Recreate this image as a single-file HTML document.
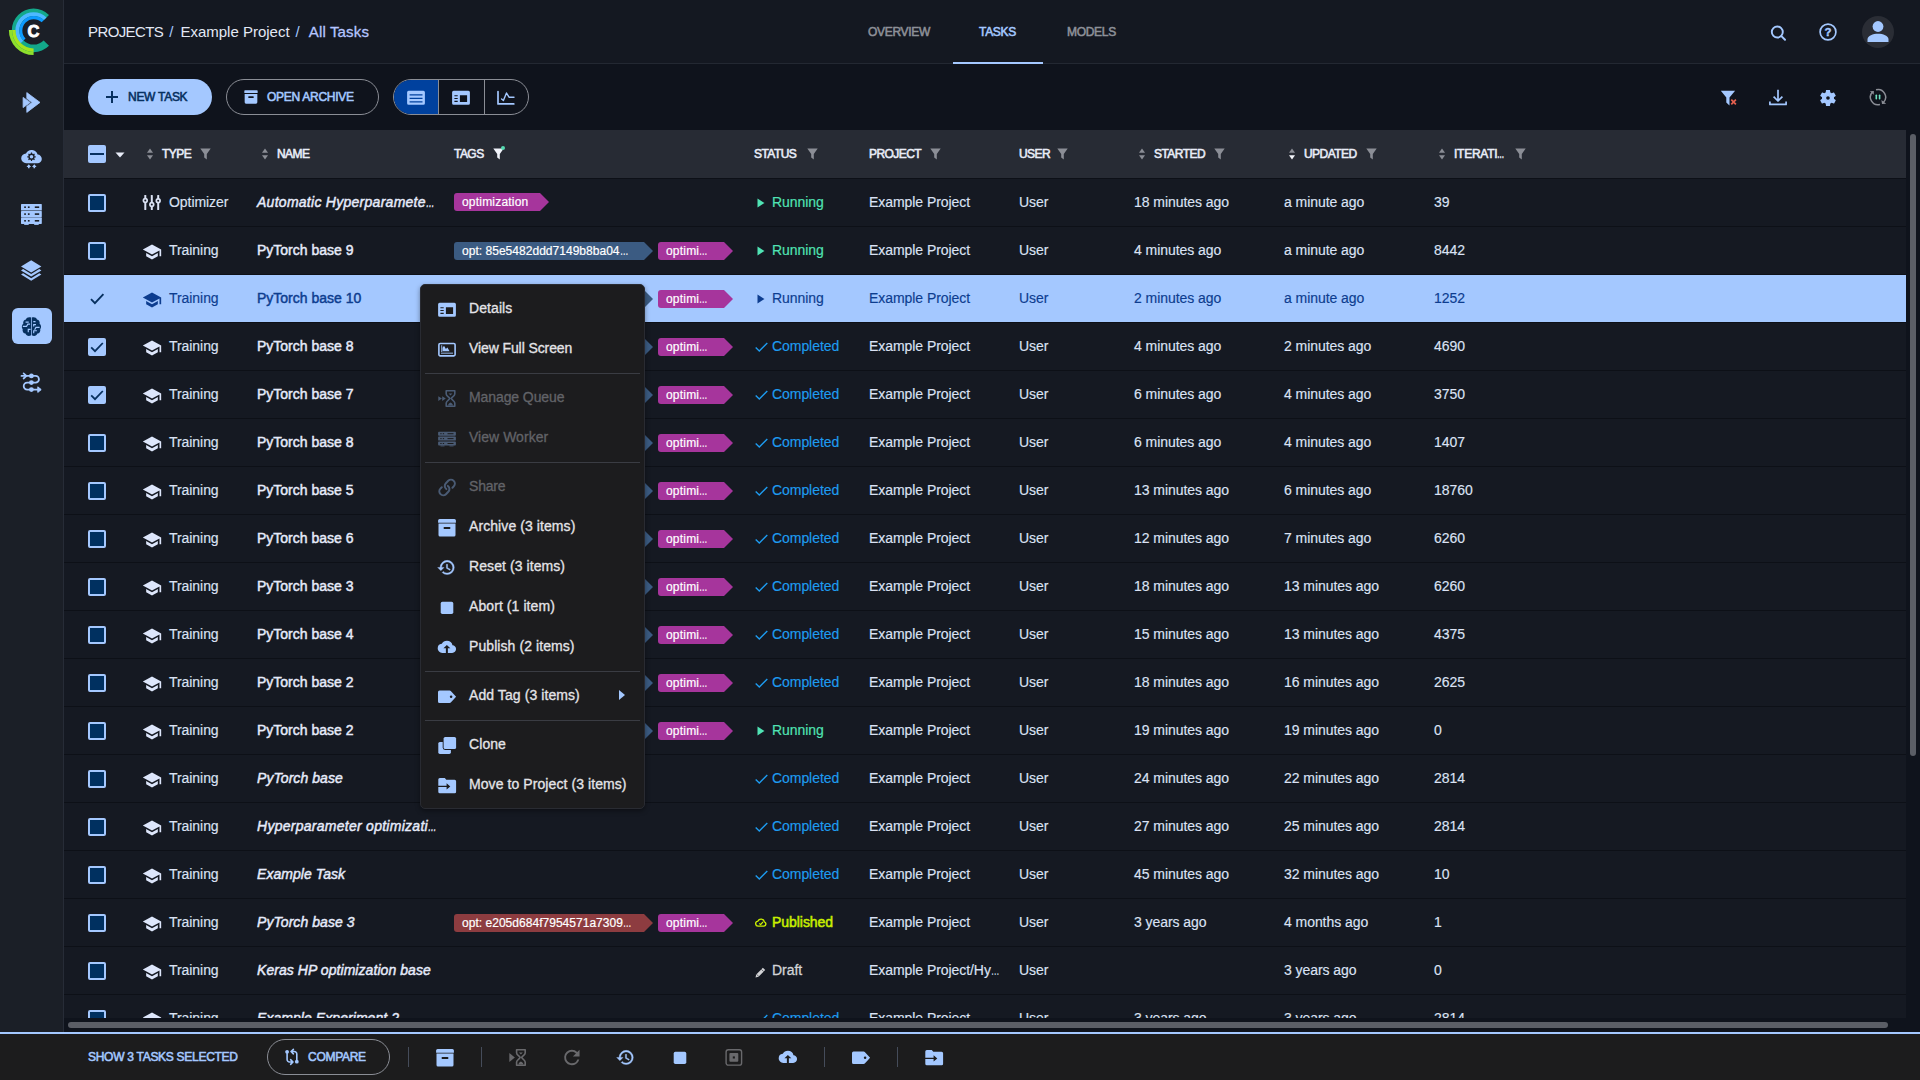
<!DOCTYPE html><html lang="en"><head><meta charset="utf-8"><title>ClearML - Example Project - All Tasks</title><style>
*{box-sizing:border-box}
html,body{margin:0;padding:0}
body{width:1920px;height:1080px;overflow:hidden;background:#0f131c;font-family:"Liberation Sans",sans-serif;font-size:14px;color:#dbe2f4;position:relative}
.abs{position:absolute}
svg{display:block}
#side{position:absolute;left:0;top:0;width:64px;height:1032px;background:#1b1f27;border-right:1px solid #272c37}
#hdr{position:absolute;left:64px;top:0;width:1856px;height:64px;background:#141821;border-bottom:1px solid #232832}
.sbi{position:absolute;left:20px;width:24px;height:24px}
#sbact{position:absolute;left:12px;top:308px;width:40px;height:36px;border-radius:6px;background:#a4c8ff}
#crumb{position:absolute;left:88px;top:0;height:64px;line-height:63px;font-size:15px;white-space:nowrap;color:#e3e8f5}
#crumb .s{color:#a4c8ff;padding:0 7px 0 6px}
#crumb .p{letter-spacing:-0.6px}
#crumb .c{color:#b4c5ff;-webkit-text-stroke:0.3px #b4c5ff;letter-spacing:0.15px;padding-left:2px}
.tab{position:absolute;top:0;height:64px;line-height:64px;font-size:12px;font-weight:400;-webkit-text-stroke:0.55px currentColor;letter-spacing:-0.3px;color:#8d9098;white-space:nowrap}
.tab.on{color:#a4c8ff}
#tabline{position:absolute;left:953px;top:62px;width:90px;height:2px;background:#a4c8ff}
.up{font-size:12px;font-weight:400;-webkit-text-stroke:0.55px currentColor;letter-spacing:-0.28px;white-space:nowrap}
#newtask{position:absolute;left:88px;top:79px;width:124px;height:36px;border-radius:18px;background:#a4c8ff;color:#07305f}
#archive{position:absolute;left:226px;top:79px;width:153px;height:36px;border-radius:18px;border:1px solid #8a8d95;color:#a4c8ff}
#tog{position:absolute;left:393px;top:79px;width:136px;height:36px;border-radius:18px;border:1px solid #8a8d95;overflow:hidden}
#tog .a{position:absolute;left:0;top:0;width:44px;height:34px;background:#00419e}
#tog .d{position:absolute;top:0;width:1px;height:34px;background:#8a8d95}
#thead{position:absolute;left:64px;top:130px;width:1842px;height:48px;background:#272b34}
.th{position:absolute;top:0;height:48px;line-height:48px;font-size:12px;font-weight:400;-webkit-text-stroke:0.55px currentColor;letter-spacing:-0.55px;color:#e9edf8;white-space:nowrap}
.thi{position:absolute}
#rows{position:absolute;left:64px;top:178px;width:1842px;height:840px;overflow:hidden}
.row{position:relative;height:48px;border-top:1px solid #0d1017;background:#151922;line-height:47px;white-space:nowrap;letter-spacing:-0.06px;-webkit-text-stroke:0.15px currentColor}
.row.sel{background:#a4c8ff;color:#0d3d8f}
.c{position:absolute;top:0;height:47px}
.nm{font-weight:400;-webkit-text-stroke:0.45px currentColor;letter-spacing:0;color:#e6ebfb}
.nm.it{font-style:italic;letter-spacing:0.06px}
.nm.it.tr{letter-spacing:0.27px}
.row.sel .nm{color:#0d3d8f}
.cb{position:absolute;left:24px;top:15px;width:18px;height:18px;border:2px solid #a4c8ff;border-radius:2px;background:#003060}
.cb.on{background:#a4c8ff}
.tag{position:absolute;top:14px;height:18px;line-height:18px;font-size:12px;color:#fff;border-radius:3px 0 0 3px;padding-left:8px;letter-spacing:0.2px;-webkit-text-stroke:0.2px #fff}
.tag.lg{letter-spacing:0.03px}
.tag .el{width:8px;transform:scaleX(0.7)}
.tag:after{content:"";position:absolute;right:-9px;top:0;border-left:9px solid var(--c);border-top:9px solid transparent;border-bottom:9px solid transparent}
.el{display:inline-block;width:7px;transform:scaleX(0.6);transform-origin:0 50%}
.st-run{color:#50e3b4}.st-done{color:#1e9cf0}.st-pub{color:#c9ef00;-webkit-text-stroke:0.5px #c9ef00;letter-spacing:-0.05px}.st-draft{color:#d2d3d6;-webkit-text-stroke:0.3px #d2d3d6}
.row.sel .st-run{color:#0d3d8f}
#hs{position:absolute;left:68px;top:1022px;width:1820px;height:6px;border-radius:3px;background:#5b5e66}
#vs{position:absolute;left:1910px;top:134px;width:6px;height:622px;border-radius:3px;background:#5b5e66}
#foot{position:absolute;left:0;top:1032px;width:1920px;height:48px;border-top:2px solid #a4c8ff;background:#1c1c1d}
.fsep{position:absolute;top:13px;width:1px;height:20px;background:#454c5a}
.fi{position:absolute;top:14px;width:18px;height:18px}
#cmp{position:absolute;left:267px;top:5px;width:123px;height:36px;border-radius:18px;border:1px solid #8a8d95;color:#a4c8ff}
#menu{position:absolute;left:420px;top:284px;width:225px;height:525px;background:#1c1c1e;border-radius:5px;box-shadow:0 2px 5px rgba(0,0,0,.4);border:1px solid #292b32}
.mi{position:absolute;left:0;width:223px;height:40px;line-height:40px;color:#e4e4e8;font-size:14px;-webkit-text-stroke:0.3px currentColor;white-space:nowrap;letter-spacing:0.08px}
.mi.dis{color:#626368}
.mi svg{position:absolute;left:17px;top:12px}
.mi span{position:absolute;left:48px;top:0}
.msep{position:absolute;left:4px;width:215px;height:1px;background:#3a3c43}
</style></head><body>
<div id="side">
<div class="abs" style="left:0;top:0"><svg width="64" height="64" viewBox="0 0 64 64"><path fill="#13a88a" d="M49.01 45.81A21.8 21.8 0 1 1 49.01 14.99L43.64 20.36A14.2 14.2 0 1 0 43.64 40.44Z"/><path fill="#4db9ff" d="M20.66 43.34A18.3 18.3 0 0 1 46.54 17.46L43.92 20.08A14.6 14.6 0 0 0 23.28 40.72Z"/><path fill="#0d9bff" d="M23.28 40.72A14.6 14.6 0 0 1 43.92 20.08L41.66 22.34A11.4 11.4 0 0 0 25.54 38.46Z"/><path fill="#a6e41e" d="M33.60 51.90A21.5 21.5 0 0 1 12.10 30.02L15.50 30.08A18.1 18.1 0 0 0 33.60 48.50Z"/><path fill="#8ee02c" d="M33.60 55.10A24.7 24.7 0 0 1 8.90 29.97L12.10 30.02A21.5 21.5 0 0 0 33.60 51.90Z"/><text x="33.4" y="37.3" text-anchor="middle" font-family="Liberation Sans, sans-serif" font-weight="700" font-size="16.5" fill="#fff" stroke="#fff" stroke-width="0.9">C</text></svg></div>
<div id="sbact"></div>
<div class="sbi" style="top:90px"><svg width="24" height="24" viewBox="0 0 24 24"><path fill="#a4c8ff" stroke="#a4c8ff" stroke-width="0.8" stroke-linejoin="round" d="M3.1 7.4L10.3 12.4 3.1 17.6z"/><path fill="#a4c8ff" stroke="#a4c8ff" stroke-width="0.8" stroke-linejoin="round" d="M6.8 2.6L20 12.4 6.8 22.4V16.3L12.2 12.4 6.8 8.5z"/></svg></div>
<div class="sbi" style="top:146px"><svg width="24" height="24" viewBox="0 0 24 24"><path fill="#a4c8ff" d="M17.6 8.6A6.2 6.2 0 0 0 6 7.4 4.9 4.9 0 0 0 6.2 17.2h11.2a4.3 4.3 0 0 0 .2-8.600z"/><circle cx="11.500" cy="10.800" r="2.500" fill="none" stroke="#1b1f27" stroke-width="1.400"/><path stroke="#1b1f27" stroke-width="1.200" d="M11.500 6.600v1.400M11.500 13.600v1.400M7.300 10.800h1.400M14.300 10.800h1.400M8.500 7.800l1 1M13.500 12.800l1 1M14.500 7.800l-1 1M8.500 13.800l1-1"/><path fill="#a4c8ff" d="M8.800 18.300l2.300 2.700H9.600v1.200H8v-1.200H6.500zM14.300 18.300l2.300 2.700h-1.500v1.200h-1.600v-1.200H12z"/></svg></div>
<div class="sbi" style="top:202px"><svg width="24" height="24" viewBox="0 0 24 24"><rect x="1" y="2.0" width="20.800" height="6.300" rx="0.600" fill="#a4c8ff"/><rect x="4.200" y="4.4" width="1.700" height="1.600" fill="#1b1f27"/><rect x="7.900" y="4.4" width="1.700" height="1.600" fill="#1b1f27"/><rect x="14.800" y="4.4" width="4.400" height="1.600" fill="#1b1f27"/><rect x="1" y="8.9" width="20.800" height="6.300" rx="0.600" fill="#a4c8ff"/><rect x="4.200" y="11.3" width="1.700" height="1.600" fill="#1b1f27"/><rect x="7.900" y="11.3" width="1.700" height="1.600" fill="#1b1f27"/><rect x="14.800" y="11.3" width="4.400" height="1.600" fill="#1b1f27"/><rect x="1" y="15.6" width="20.800" height="6.300" rx="0.600" fill="#a4c8ff"/><rect x="4.200" y="18.0" width="1.700" height="1.600" fill="#1b1f27"/><rect x="7.900" y="18.0" width="1.700" height="1.600" fill="#1b1f27"/><rect x="14.800" y="18.0" width="4.400" height="1.600" fill="#1b1f27"/><rect x="1" y="8.300" width="20.800" height="0.600" fill="#a4c8ff" opacity="0.55"/><rect x="1" y="15.200" width="20.800" height="0.400" fill="#a4c8ff" opacity="0.55"/><rect x="4.200" y="21.900" width="4.500" height="1" fill="#a4c8ff"/><rect x="14.200" y="21.900" width="4.500" height="1" fill="#a4c8ff"/></svg></div>
<div class="sbi" style="top:258px"><svg width="24" height="24" viewBox="0 0 24 24"><path fill="#a4c8ff" d="M11.200 2.200L1 8.400l10.200 6.200L21.400 8.400z"/><path fill="#a4c8ff" d="M3.100 11.100L1 12.400l10.200 6.200 10.200-6.200-2.100-1.300-8.100 4.900z"/><path fill="#a4c8ff" d="M3.100 15.300L1 16.600l10.200 6.200 10.200-6.200-2.100-1.300-8.100 4.900z"/></svg></div>
<div class="sbi" style="top:314px"><svg width="24" height="24" viewBox="0 0 24 24"><g transform="translate(0.575 1.470) scale(0.906 0.955)"><path fill="#07305f" d="M11.600 2.200C9.200 1.200 6.600 2 5.900 4.200 3.600 4.600 2.400 6.800 3 8.800 1.200 10 .8 12.600 2.300 14.300 1.700 16.600 3.200 18.800 5.400 19c.8 2.400 3.800 3.400 6.200 1.800zM12.400 2.200c2.400-1 5-.2 5.700 2 2.300.4 3.500 2.600 2.900 4.600 1.800 1.200 2.200 3.800.7 5.500.6 2.300-.9 4.500-3.100 4.700-.8 2.400-3.800 3.400-6.200 1.800z"/><path fill="none" stroke="#a4c8ff" stroke-width="1.300" d="M2.500 11.500h4l1.500-2.500h2.500M5.500 7h3.500M8.500 17.500v-3h2.500M21 12.500h-4l-1.500 2.500M14 6.500h2.500M17 9.500h-2.500v2M18 16h-3.500v2.500"/></g></svg></div>
<div class="sbi" style="top:370px"><svg width="24" height="24" viewBox="0 0 24 24"><path fill="none" stroke="#a4c8ff" stroke-width="1.800" stroke-linecap="round" stroke-linejoin="round" d="M1.500 5.900H15.600a3.350 3.350 0 0 1 0 6.700H7.200a3.500 3.500 0 0 0 0 7H20"/><path fill="none" stroke="#a4c8ff" stroke-width="1.700" stroke-linecap="round" stroke-linejoin="round" d="M3.600 3.300l2.900 2.600-2.900 2.600"/><path fill="#a4c8ff" stroke="#a4c8ff" stroke-width="1" stroke-linejoin="round" d="M17.800 16.800l3.400 2.800-3.400 2.800z"/><circle cx="11.400" cy="5.900" r="2.400" fill="#a4c8ff"/><circle cx="11.400" cy="12.600" r="2.400" fill="#a4c8ff"/><circle cx="11.400" cy="19.600" r="2.400" fill="#a4c8ff"/></svg></div>
</div>
<div id="hdr"></div>
<div id="crumb"><span class="p">PROJECTS</span><span class="s">/</span>Example Project<span class="s">/</span><span class="c">All Tasks</span></div>
<div class="tab" style="left:868px">OVERVIEW</div><div class="tab on" style="left:979px">TASKS</div><div class="tab" style="left:1067px">MODELS</div><div id="tabline"></div>
<div class="abs" style="left:1768px;top:22px"><svg width="20" height="20" viewBox="0 0 20 20"><circle cx="9.300" cy="10" r="5.500" fill="none" stroke="#a4c8ff" stroke-width="1.900"/><path stroke="#a4c8ff" stroke-width="2" stroke-linecap="round" d="M13.400 14.100l3.600 3.600"/></svg></div>
<div class="abs" style="left:1818px;top:22px"><svg width="20" height="20" viewBox="0 0 20 20"><circle cx="10" cy="10" r="7.900" fill="none" stroke="#a4c8ff" stroke-width="1.700"/><text x="10" y="14.200" text-anchor="middle" font-family="Liberation Sans, sans-serif" font-weight="700" font-size="11.500" fill="#a4c8ff" stroke="#a4c8ff" stroke-width="0.400">?</text></svg></div>
<div class="abs" style="left:1862px;top:16px"><svg width="32" height="32" viewBox="0 0 32 32"><circle cx="16" cy="16" r="16" fill="#2a2d35"/><circle cx="16" cy="10.500" r="5.400" fill="#a4c8ff"/><path fill="#a4c8ff" d="M5.500 26v-2.500c0-3.800 5.500-5.700 10.500-5.700s10.500 1.900 10.500 5.700V26z"/></svg></div>
<div id="newtask"><div class="abs" style="left:17px;top:11px"><svg width="14" height="14" viewBox="0 0 14 14"><path stroke="#07305f" stroke-width="2" d="M7 1v12M1 7h12"/></svg></div><div class="abs up" style="left:40px;top:0;line-height:36px">NEW TASK</div></div>
<div id="archive"><div class="abs" style="left:16px;top:9px"><svg width="16" height="16" viewBox="0 0 24 24"><path fill="#a4c8ff" d="M3 2h18a1 1 0 0 1 1 1v3H2V3a1 1 0 0 1 1-1zM2.500 7.500h19V20a2 2 0 0 1-2 2h-15a2 2 0 0 1-2-2z"/><rect x="8" y="11" width="8" height="2.500" rx="0.500" fill="#0f131c"/></svg></div><div class="abs up" style="left:40px;top:0;line-height:34px">OPEN ARCHIVE</div></div>
<div id="tog"><div class="a"></div><div class="d" style="left:44px"></div><div class="d" style="left:90px"></div><div class="abs" style="left:13px;top:8px"><svg width="18" height="18" viewBox="0 0 18 18" style="overflow:visible"><path fill="#a4c8ff" fill-rule="evenodd" d="M1.600 2.700h14.800a1.500 1.500 0 0 1 1.500 1.500v11.100a1.500 1.500 0 0 1-1.500 1.500H1.600a1.500 1.500 0 0 1-1.500-1.500V4.200a1.500 1.500 0 0 1 1.500-1.500zM2.600 6.300v1.200h12.900V6.300zM2.600 9.800v1.200h12.900V9.800zM2.600 13.300v1.200h12.900v-1.200z"/></svg></div><div class="abs" style="left:58px;top:8px"><svg width="18" height="18" viewBox="0 0 18 18" style="overflow:visible"><path fill="#a4c8ff" fill-rule="evenodd" d="M1.600 2.700h14.800a1.500 1.500 0 0 1 1.500 1.500v11.100a1.500 1.500 0 0 1-1.500 1.500H1.600a1.500 1.500 0 0 1-1.500-1.500V4.200a1.500 1.500 0 0 1 1.500-1.500zM7.900 7.200v6.700h7.200V7.200zM2.400 7.200v1.100h3.300V7.200zM2.400 10v1.100h3.300V10zM2.400 12.800v1.100h3.300v-1.100z"/></svg></div><div class="abs" style="left:103px;top:8px"><svg width="18" height="18" viewBox="0 0 18 18" style="overflow:visible"><path fill="none" stroke="#a4c8ff" stroke-width="1.700" stroke-linecap="round" stroke-linejoin="round" d="M1 3.600v12.300h15.800"/><path fill="none" stroke="#a4c8ff" stroke-width="1.400" stroke-linecap="round" stroke-linejoin="round" d="M4.600 11l1.800 1.500L9.500 5l2.500 4.200h5"/></svg></div></div>
<div class="abs" style="left:1718px;top:88px"><svg width="20" height="20" viewBox="0 0 20 20" style="overflow:visible"><path fill="#a4c8ff" d="M2.800 2.800h14.300l-5.600 6.800v7.800l-3.200-2.800V9.600z"/><path stroke="#e5604f" stroke-width="1.700" d="M13.300 11.700l4.600 4.600M17.900 11.700l-4.600 4.600"/></svg></div>
<div class="abs" style="left:1768px;top:88px"><svg width="20" height="20" viewBox="0 0 20 20"><path fill="none" stroke="#a4c8ff" stroke-width="1.700" stroke-linejoin="round" d="M10 1.800v11M5.600 8.600L10 13l4.400-4.400M1.900 13.600v2.800h16.200v-2.800"/></svg></div>
<div class="abs" style="left:1818px;top:88px"><svg width="20" height="20" viewBox="0 0 24 24"><path fill="#a4c8ff" d="M19.140 12.940c.04-.3.060-.61.060-.94 0-.32-.020-.64-.070-.94l2.030-1.580c.18-.14.230-.41.120-.61l-1.920-3.320c-.12-.22-.37-.29-.59-.22l-2.390.96c-.5-.38-1.030-.7-1.620-.94l-.36-2.540c-.04-.24-.24-.41-.48-.41h-3.840c-.24 0-.43.17-.47.41l-.36 2.540c-.59.24-1.130.57-1.620.94l-2.390-.96c-.22-.08-.47 0-.59.22L2.740 8.870c-.12.21-.08.47.12.61l2.030 1.580c-.05.3-.09.63-.09.94s.02.64.07.94l-2.030 1.580c-.18.14-.23.41-.12.61l1.920 3.320c.12.220.37.290.59.220l2.390-.96c.5.380 1.030.7 1.620.94l.36 2.540c.05.240.24.410.48.410h3.840c.24 0 .44-.17.47-.41l.36-2.540c.59-.24 1.130-.56 1.620-.94l2.390.96c.22.080.47 0 .59-.22l1.920-3.320c.12-.22.070-.47-.12-.61l-2.010-1.580zM12 15.600c-1.980 0-3.600-1.620-3.600-3.600s1.620-3.600 3.600-3.600 3.600 1.620 3.600 3.600-1.620 3.600-3.600 3.600z"/><circle cx="12" cy="12" r="3.900" fill="#a4c8ff"/><circle cx="12" cy="12" r="2.200" fill="#0f131c"/></svg></div>
<div class="abs" style="left:1868px;top:87px"><svg width="20" height="20" viewBox="0 0 20 20"><path fill="none" stroke="#8b8e96" stroke-width="1.500" d="M8.030 2.760A7.600 7.600 0 0 1 15.370 15.470M11.970 17.440A7.600 7.600 0 0 1 4.630 4.730"/><path fill="#8b8e96" d="M13.400 13.050L18.200 16.700 14 16.900zM1.900 4.200L5.900 3.900 5.700 7.800z"/><rect x="7.500" y="7.500" width="1.600" height="5" rx="0.700" fill="#6fe0c0"/><rect x="10.800" y="7.500" width="1.600" height="5" rx="0.700" fill="#6fe0c0"/></svg></div>
<div id="thead">
<div class="abs" style="left:24px;top:15px;width:18px;height:18px;border-radius:2px;background:#a4c8ff"><div class="abs" style="left:2px;top:8px;width:14px;height:2px;background:#07305f"></div></div>
<div class="abs" style="left:51px;top:22px"><svg width="10" height="6" viewBox="0 0 10 6"><path fill="#e9edf8" d="M0.500 0.500h9L5 5.500z"/></svg></div>
<div class="th" style="left:98px">TYPE</div>
<div class="thi" style="left:83px;top:18px"><svg width="6" height="12" viewBox="0 0 6 12"><path fill="#8b8e96" d="M3 0.5l3 4.3H0z"/><path fill="#8b8e96" d="M3 11.5l3-4.3H0z"/></svg></div>
<div class="thi" style="left:136px;top:18px"><svg width="11" height="12" viewBox="0 0 11 12"><path fill="#8b8e96" d="M0.3 0.6h10.4L6.8 6v5.6L4.2 9.6V6z"/></svg></div>
<div class="th" style="left:213px">NAME</div>
<div class="thi" style="left:198px;top:18px"><svg width="6" height="12" viewBox="0 0 6 12"><path fill="#8b8e96" d="M3 0.5l3 4.3H0z"/><path fill="#8b8e96" d="M3 11.5l3-4.3H0z"/></svg></div>
<div class="th" style="left:390px">TAGS</div>
<div class="thi" style="left:429px;top:18px"><svg width="11" height="12" viewBox="0 0 11 12"><path fill="#f1f4fb" d="M0.3 0.6h10.4L6.8 6v5.6L4.2 9.6V6z"/></svg></div><div class="thi" style="left:437px;top:16px;width:4px;height:4px;border-radius:2px;background:#55d8b0"></div>
<div class="th" style="left:690px">STATUS</div>
<div class="thi" style="left:743px;top:18px"><svg width="11" height="12" viewBox="0 0 11 12"><path fill="#8b8e96" d="M0.3 0.6h10.4L6.8 6v5.6L4.2 9.6V6z"/></svg></div>
<div class="th" style="left:805px">PROJECT</div>
<div class="thi" style="left:866px;top:18px"><svg width="11" height="12" viewBox="0 0 11 12"><path fill="#8b8e96" d="M0.3 0.6h10.4L6.8 6v5.6L4.2 9.6V6z"/></svg></div>
<div class="th" style="left:955px">USER</div>
<div class="thi" style="left:993px;top:18px"><svg width="11" height="12" viewBox="0 0 11 12"><path fill="#8b8e96" d="M0.3 0.6h10.4L6.8 6v5.6L4.2 9.6V6z"/></svg></div>
<div class="th" style="left:1090px">STARTED</div>
<div class="thi" style="left:1075px;top:18px"><svg width="6" height="12" viewBox="0 0 6 12"><path fill="#8b8e96" d="M3 0.5l3 4.3H0z"/><path fill="#8b8e96" d="M3 11.5l3-4.3H0z"/></svg></div>
<div class="thi" style="left:1150px;top:18px"><svg width="11" height="12" viewBox="0 0 11 12"><path fill="#8b8e96" d="M0.3 0.6h10.4L6.8 6v5.6L4.2 9.6V6z"/></svg></div>
<div class="th" style="left:1240px">UPDATED</div>
<div class="thi" style="left:1225px;top:18px"><svg width="6" height="12" viewBox="0 0 6 12"><path fill="#8b8e96" d="M3 0.5l3 4.3H0z"/><path fill="#f4f6fb" d="M3 11.5l3-4.3H0z"/></svg></div>
<div class="thi" style="left:1302px;top:18px"><svg width="11" height="12" viewBox="0 0 11 12"><path fill="#8b8e96" d="M0.3 0.6h10.4L6.8 6v5.6L4.2 9.6V6z"/></svg></div>
<div class="th" style="left:1390px;letter-spacing:-0.25px">ITERATI<span class="el" style="width:8px">…</span></div>
<div class="thi" style="left:1375px;top:18px"><svg width="6" height="12" viewBox="0 0 6 12"><path fill="#8b8e96" d="M3 0.5l3 4.3H0z"/><path fill="#8b8e96" d="M3 11.5l3-4.3H0z"/></svg></div>
<div class="thi" style="left:1451px;top:18px"><svg width="11" height="12" viewBox="0 0 11 12"><path fill="#8b8e96" d="M0.3 0.6h10.4L6.8 6v5.6L4.2 9.6V6z"/></svg></div>
</div>
<div id="rows">
<div class="row">
<div class="cb"></div>
<div class="abs" style="left:78px;top:15px"><svg width="20" height="20" viewBox="0 0 20 20"><rect x="2.3" y="1" width="2" height="15" rx="0.6" fill="#dbe2f4"/><circle cx="3.3" cy="6.5" r="2.7" fill="#dbe2f4"/><circle cx="3.3" cy="6.5" r="1" fill="#151922"/><rect x="8.8" y="1" width="2" height="15" rx="0.6" fill="#dbe2f4"/><circle cx="9.8" cy="10.5" r="2.7" fill="#dbe2f4"/><circle cx="9.8" cy="10.5" r="1" fill="#151922"/><rect x="15.2" y="1" width="2" height="15" rx="0.6" fill="#dbe2f4"/><circle cx="16.2" cy="6.7" r="2.7" fill="#dbe2f4"/><circle cx="16.2" cy="6.7" r="1" fill="#151922"/></svg></div>
<div class="c" style="left:105px">Optimizer</div>
<div class="c nm it tr" style="left:193px">Automatic Hyperparamete<span class="el">…</span></div>
<div class="tag" style="left:390px;top:14px;width:86px;background:#a6359c;--c:#a6359c">optimization</div>
<div class="abs" style="left:693px;top:19px"><svg width="8" height="10" viewBox="0 0 8 10"><path fill="#50e3b4" d="M0.500 0.500L7.500 5 0.500 9.500z"/></svg></div>
<div class="c st-run" style="left:708px">Running</div>
<div class="c" style="left:805px">Example Project</div>
<div class="c" style="left:955px">User</div>
<div class="c" style="left:1070px">18 minutes ago</div>
<div class="c" style="left:1220px">a minute ago</div>
<div class="c" style="left:1370px">39</div>
</div>
<div class="row">
<div class="cb"></div>
<div class="abs" style="left:78px;top:15px"><svg width="20" height="20" viewBox="0 0 24 24"><path fill="#dde6fb" d="M5 13.18v4L12 21l7-3.82v-4L12 17l-7-3.82zM12 3 1 9l11 6 9-4.91V17h2V9L12 3z"/></svg></div>
<div class="c" style="left:105px">Training</div>
<div class="c nm" style="left:193px">PyTorch base 9</div>
<div class="tag lg" style="left:390px;top:15px;width:190px;background:#3b5b82;--c:#3b5b82">opt: 85e5482ddd7149b8ba04<span class="el">…</span></div>
<div class="tag" style="left:594px;top:15px;width:66px;background:#a6359c;--c:#a6359c">optimi<span class="el">…</span></div>
<div class="abs" style="left:693px;top:19px"><svg width="8" height="10" viewBox="0 0 8 10"><path fill="#50e3b4" d="M0.500 0.500L7.500 5 0.500 9.500z"/></svg></div>
<div class="c st-run" style="left:708px">Running</div>
<div class="c" style="left:805px">Example Project</div>
<div class="c" style="left:955px">User</div>
<div class="c" style="left:1070px">4 minutes ago</div>
<div class="c" style="left:1220px">a minute ago</div>
<div class="c" style="left:1370px">8442</div>
</div>
<div class="row sel">
<div class="abs" style="left:25px;top:17px"><svg width="16" height="13" viewBox="0 0 16 13"><path fill="none" stroke="#07305f" stroke-width="1.900" d="M2 7.200l3.900 3.900L14.400 2.200"/></svg></div>
<div class="abs" style="left:78px;top:15px"><svg width="20" height="20" viewBox="0 0 24 24"><path fill="#0d3d8f" d="M5 13.18v4L12 21l7-3.82v-4L12 17l-7-3.82zM12 3 1 9l11 6 9-4.91V17h2V9L12 3z"/></svg></div>
<div class="c" style="left:105px">Training</div>
<div class="c nm" style="left:193px">PyTorch base 10</div>
<div class="tag lg" style="left:390px;top:15px;width:190px;background:#3b5b82;--c:#3b5b82">opt: 85e5482ddd7149b8ba04<span class="el">…</span></div>
<div class="tag" style="left:594px;top:15px;width:66px;background:#a6359c;--c:#a6359c">optimi<span class="el">…</span></div>
<div class="abs" style="left:693px;top:19px"><svg width="8" height="10" viewBox="0 0 8 10"><path fill="#0d3d8f" d="M0.500 0.500L7.500 5 0.500 9.500z"/></svg></div>
<div class="c st-run" style="left:708px">Running</div>
<div class="c" style="left:805px">Example Project</div>
<div class="c" style="left:955px">User</div>
<div class="c" style="left:1070px">2 minutes ago</div>
<div class="c" style="left:1220px">a minute ago</div>
<div class="c" style="left:1370px">1252</div>
</div>
<div class="row">
<div class="cb on"><svg width="14" height="14" viewBox="0 0 14 14"><path fill="none" stroke="#07305f" stroke-width="1.800" d="M1.200 7.300l3.800 3.800L12.800 3"/></svg></div>
<div class="abs" style="left:78px;top:15px"><svg width="20" height="20" viewBox="0 0 24 24"><path fill="#dde6fb" d="M5 13.18v4L12 21l7-3.82v-4L12 17l-7-3.82zM12 3 1 9l11 6 9-4.91V17h2V9L12 3z"/></svg></div>
<div class="c" style="left:105px">Training</div>
<div class="c nm" style="left:193px">PyTorch base 8</div>
<div class="tag lg" style="left:390px;top:15px;width:190px;background:#3b5b82;--c:#3b5b82">opt: 85e5482ddd7149b8ba04<span class="el">…</span></div>
<div class="tag" style="left:594px;top:15px;width:66px;background:#a6359c;--c:#a6359c">optimi<span class="el">…</span></div>
<div class="abs" style="left:691px;top:19px"><svg width="13" height="10" viewBox="0 0 13 10"><path fill="none" stroke="#1e9cf0" stroke-width="1.400" d="M0.700 5.500l3.600 3.500L12.300 1"/></svg></div>
<div class="c st-done" style="left:708px">Completed</div>
<div class="c" style="left:805px">Example Project</div>
<div class="c" style="left:955px">User</div>
<div class="c" style="left:1070px">4 minutes ago</div>
<div class="c" style="left:1220px">2 minutes ago</div>
<div class="c" style="left:1370px">4690</div>
</div>
<div class="row">
<div class="cb on"><svg width="14" height="14" viewBox="0 0 14 14"><path fill="none" stroke="#07305f" stroke-width="1.800" d="M1.200 7.300l3.800 3.800L12.800 3"/></svg></div>
<div class="abs" style="left:78px;top:15px"><svg width="20" height="20" viewBox="0 0 24 24"><path fill="#dde6fb" d="M5 13.18v4L12 21l7-3.82v-4L12 17l-7-3.82zM12 3 1 9l11 6 9-4.91V17h2V9L12 3z"/></svg></div>
<div class="c" style="left:105px">Training</div>
<div class="c nm" style="left:193px">PyTorch base 7</div>
<div class="tag lg" style="left:390px;top:15px;width:190px;background:#3b5b82;--c:#3b5b82">opt: 85e5482ddd7149b8ba04<span class="el">…</span></div>
<div class="tag" style="left:594px;top:15px;width:66px;background:#a6359c;--c:#a6359c">optimi<span class="el">…</span></div>
<div class="abs" style="left:691px;top:19px"><svg width="13" height="10" viewBox="0 0 13 10"><path fill="none" stroke="#1e9cf0" stroke-width="1.400" d="M0.700 5.500l3.600 3.500L12.300 1"/></svg></div>
<div class="c st-done" style="left:708px">Completed</div>
<div class="c" style="left:805px">Example Project</div>
<div class="c" style="left:955px">User</div>
<div class="c" style="left:1070px">6 minutes ago</div>
<div class="c" style="left:1220px">4 minutes ago</div>
<div class="c" style="left:1370px">3750</div>
</div>
<div class="row">
<div class="cb"></div>
<div class="abs" style="left:78px;top:15px"><svg width="20" height="20" viewBox="0 0 24 24"><path fill="#dde6fb" d="M5 13.18v4L12 21l7-3.82v-4L12 17l-7-3.82zM12 3 1 9l11 6 9-4.91V17h2V9L12 3z"/></svg></div>
<div class="c" style="left:105px">Training</div>
<div class="c nm" style="left:193px">PyTorch base 8</div>
<div class="tag lg" style="left:390px;top:15px;width:190px;background:#3b5b82;--c:#3b5b82">opt: 85e5482ddd7149b8ba04<span class="el">…</span></div>
<div class="tag" style="left:594px;top:15px;width:66px;background:#a6359c;--c:#a6359c">optimi<span class="el">…</span></div>
<div class="abs" style="left:691px;top:19px"><svg width="13" height="10" viewBox="0 0 13 10"><path fill="none" stroke="#1e9cf0" stroke-width="1.400" d="M0.700 5.500l3.600 3.500L12.300 1"/></svg></div>
<div class="c st-done" style="left:708px">Completed</div>
<div class="c" style="left:805px">Example Project</div>
<div class="c" style="left:955px">User</div>
<div class="c" style="left:1070px">6 minutes ago</div>
<div class="c" style="left:1220px">4 minutes ago</div>
<div class="c" style="left:1370px">1407</div>
</div>
<div class="row">
<div class="cb"></div>
<div class="abs" style="left:78px;top:15px"><svg width="20" height="20" viewBox="0 0 24 24"><path fill="#dde6fb" d="M5 13.18v4L12 21l7-3.82v-4L12 17l-7-3.82zM12 3 1 9l11 6 9-4.91V17h2V9L12 3z"/></svg></div>
<div class="c" style="left:105px">Training</div>
<div class="c nm" style="left:193px">PyTorch base 5</div>
<div class="tag lg" style="left:390px;top:15px;width:190px;background:#3b5b82;--c:#3b5b82">opt: 85e5482ddd7149b8ba04<span class="el">…</span></div>
<div class="tag" style="left:594px;top:15px;width:66px;background:#a6359c;--c:#a6359c">optimi<span class="el">…</span></div>
<div class="abs" style="left:691px;top:19px"><svg width="13" height="10" viewBox="0 0 13 10"><path fill="none" stroke="#1e9cf0" stroke-width="1.400" d="M0.700 5.500l3.600 3.500L12.300 1"/></svg></div>
<div class="c st-done" style="left:708px">Completed</div>
<div class="c" style="left:805px">Example Project</div>
<div class="c" style="left:955px">User</div>
<div class="c" style="left:1070px">13 minutes ago</div>
<div class="c" style="left:1220px">6 minutes ago</div>
<div class="c" style="left:1370px">18760</div>
</div>
<div class="row">
<div class="cb"></div>
<div class="abs" style="left:78px;top:15px"><svg width="20" height="20" viewBox="0 0 24 24"><path fill="#dde6fb" d="M5 13.18v4L12 21l7-3.82v-4L12 17l-7-3.82zM12 3 1 9l11 6 9-4.91V17h2V9L12 3z"/></svg></div>
<div class="c" style="left:105px">Training</div>
<div class="c nm" style="left:193px">PyTorch base 6</div>
<div class="tag lg" style="left:390px;top:15px;width:190px;background:#3b5b82;--c:#3b5b82">opt: 85e5482ddd7149b8ba04<span class="el">…</span></div>
<div class="tag" style="left:594px;top:15px;width:66px;background:#a6359c;--c:#a6359c">optimi<span class="el">…</span></div>
<div class="abs" style="left:691px;top:19px"><svg width="13" height="10" viewBox="0 0 13 10"><path fill="none" stroke="#1e9cf0" stroke-width="1.400" d="M0.700 5.500l3.600 3.500L12.300 1"/></svg></div>
<div class="c st-done" style="left:708px">Completed</div>
<div class="c" style="left:805px">Example Project</div>
<div class="c" style="left:955px">User</div>
<div class="c" style="left:1070px">12 minutes ago</div>
<div class="c" style="left:1220px">7 minutes ago</div>
<div class="c" style="left:1370px">6260</div>
</div>
<div class="row">
<div class="cb"></div>
<div class="abs" style="left:78px;top:15px"><svg width="20" height="20" viewBox="0 0 24 24"><path fill="#dde6fb" d="M5 13.18v4L12 21l7-3.82v-4L12 17l-7-3.82zM12 3 1 9l11 6 9-4.91V17h2V9L12 3z"/></svg></div>
<div class="c" style="left:105px">Training</div>
<div class="c nm" style="left:193px">PyTorch base 3</div>
<div class="tag lg" style="left:390px;top:15px;width:190px;background:#3b5b82;--c:#3b5b82">opt: 85e5482ddd7149b8ba04<span class="el">…</span></div>
<div class="tag" style="left:594px;top:15px;width:66px;background:#a6359c;--c:#a6359c">optimi<span class="el">…</span></div>
<div class="abs" style="left:691px;top:19px"><svg width="13" height="10" viewBox="0 0 13 10"><path fill="none" stroke="#1e9cf0" stroke-width="1.400" d="M0.700 5.500l3.600 3.500L12.300 1"/></svg></div>
<div class="c st-done" style="left:708px">Completed</div>
<div class="c" style="left:805px">Example Project</div>
<div class="c" style="left:955px">User</div>
<div class="c" style="left:1070px">18 minutes ago</div>
<div class="c" style="left:1220px">13 minutes ago</div>
<div class="c" style="left:1370px">6260</div>
</div>
<div class="row">
<div class="cb"></div>
<div class="abs" style="left:78px;top:15px"><svg width="20" height="20" viewBox="0 0 24 24"><path fill="#dde6fb" d="M5 13.18v4L12 21l7-3.82v-4L12 17l-7-3.82zM12 3 1 9l11 6 9-4.91V17h2V9L12 3z"/></svg></div>
<div class="c" style="left:105px">Training</div>
<div class="c nm" style="left:193px">PyTorch base 4</div>
<div class="tag lg" style="left:390px;top:15px;width:190px;background:#3b5b82;--c:#3b5b82">opt: 85e5482ddd7149b8ba04<span class="el">…</span></div>
<div class="tag" style="left:594px;top:15px;width:66px;background:#a6359c;--c:#a6359c">optimi<span class="el">…</span></div>
<div class="abs" style="left:691px;top:19px"><svg width="13" height="10" viewBox="0 0 13 10"><path fill="none" stroke="#1e9cf0" stroke-width="1.400" d="M0.700 5.500l3.600 3.500L12.300 1"/></svg></div>
<div class="c st-done" style="left:708px">Completed</div>
<div class="c" style="left:805px">Example Project</div>
<div class="c" style="left:955px">User</div>
<div class="c" style="left:1070px">15 minutes ago</div>
<div class="c" style="left:1220px">13 minutes ago</div>
<div class="c" style="left:1370px">4375</div>
</div>
<div class="row">
<div class="cb"></div>
<div class="abs" style="left:78px;top:15px"><svg width="20" height="20" viewBox="0 0 24 24"><path fill="#dde6fb" d="M5 13.18v4L12 21l7-3.82v-4L12 17l-7-3.82zM12 3 1 9l11 6 9-4.91V17h2V9L12 3z"/></svg></div>
<div class="c" style="left:105px">Training</div>
<div class="c nm" style="left:193px">PyTorch base 2</div>
<div class="tag lg" style="left:390px;top:15px;width:190px;background:#3b5b82;--c:#3b5b82">opt: 85e5482ddd7149b8ba04<span class="el">…</span></div>
<div class="tag" style="left:594px;top:15px;width:66px;background:#a6359c;--c:#a6359c">optimi<span class="el">…</span></div>
<div class="abs" style="left:691px;top:19px"><svg width="13" height="10" viewBox="0 0 13 10"><path fill="none" stroke="#1e9cf0" stroke-width="1.400" d="M0.700 5.500l3.600 3.500L12.300 1"/></svg></div>
<div class="c st-done" style="left:708px">Completed</div>
<div class="c" style="left:805px">Example Project</div>
<div class="c" style="left:955px">User</div>
<div class="c" style="left:1070px">18 minutes ago</div>
<div class="c" style="left:1220px">16 minutes ago</div>
<div class="c" style="left:1370px">2625</div>
</div>
<div class="row">
<div class="cb"></div>
<div class="abs" style="left:78px;top:15px"><svg width="20" height="20" viewBox="0 0 24 24"><path fill="#dde6fb" d="M5 13.18v4L12 21l7-3.82v-4L12 17l-7-3.82zM12 3 1 9l11 6 9-4.91V17h2V9L12 3z"/></svg></div>
<div class="c" style="left:105px">Training</div>
<div class="c nm" style="left:193px">PyTorch base 2</div>
<div class="tag lg" style="left:390px;top:15px;width:190px;background:#3b5b82;--c:#3b5b82">opt: 85e5482ddd7149b8ba04<span class="el">…</span></div>
<div class="tag" style="left:594px;top:15px;width:66px;background:#a6359c;--c:#a6359c">optimi<span class="el">…</span></div>
<div class="abs" style="left:693px;top:19px"><svg width="8" height="10" viewBox="0 0 8 10"><path fill="#50e3b4" d="M0.500 0.500L7.500 5 0.500 9.500z"/></svg></div>
<div class="c st-run" style="left:708px">Running</div>
<div class="c" style="left:805px">Example Project</div>
<div class="c" style="left:955px">User</div>
<div class="c" style="left:1070px">19 minutes ago</div>
<div class="c" style="left:1220px">19 minutes ago</div>
<div class="c" style="left:1370px">0</div>
</div>
<div class="row">
<div class="cb"></div>
<div class="abs" style="left:78px;top:15px"><svg width="20" height="20" viewBox="0 0 24 24"><path fill="#dde6fb" d="M5 13.18v4L12 21l7-3.82v-4L12 17l-7-3.82zM12 3 1 9l11 6 9-4.91V17h2V9L12 3z"/></svg></div>
<div class="c" style="left:105px">Training</div>
<div class="c nm it" style="left:193px">PyTorch base</div>
<div class="abs" style="left:691px;top:19px"><svg width="13" height="10" viewBox="0 0 13 10"><path fill="none" stroke="#1e9cf0" stroke-width="1.400" d="M0.700 5.500l3.600 3.500L12.300 1"/></svg></div>
<div class="c st-done" style="left:708px">Completed</div>
<div class="c" style="left:805px">Example Project</div>
<div class="c" style="left:955px">User</div>
<div class="c" style="left:1070px">24 minutes ago</div>
<div class="c" style="left:1220px">22 minutes ago</div>
<div class="c" style="left:1370px">2814</div>
</div>
<div class="row">
<div class="cb"></div>
<div class="abs" style="left:78px;top:15px"><svg width="20" height="20" viewBox="0 0 24 24"><path fill="#dde6fb" d="M5 13.18v4L12 21l7-3.82v-4L12 17l-7-3.82zM12 3 1 9l11 6 9-4.91V17h2V9L12 3z"/></svg></div>
<div class="c" style="left:105px">Training</div>
<div class="c nm it tr" style="left:193px">Hyperparameter optimizati<span class="el">…</span></div>
<div class="abs" style="left:691px;top:19px"><svg width="13" height="10" viewBox="0 0 13 10"><path fill="none" stroke="#1e9cf0" stroke-width="1.400" d="M0.700 5.500l3.600 3.500L12.300 1"/></svg></div>
<div class="c st-done" style="left:708px">Completed</div>
<div class="c" style="left:805px">Example Project</div>
<div class="c" style="left:955px">User</div>
<div class="c" style="left:1070px">27 minutes ago</div>
<div class="c" style="left:1220px">25 minutes ago</div>
<div class="c" style="left:1370px">2814</div>
</div>
<div class="row">
<div class="cb"></div>
<div class="abs" style="left:78px;top:15px"><svg width="20" height="20" viewBox="0 0 24 24"><path fill="#dde6fb" d="M5 13.18v4L12 21l7-3.82v-4L12 17l-7-3.82zM12 3 1 9l11 6 9-4.91V17h2V9L12 3z"/></svg></div>
<div class="c" style="left:105px">Training</div>
<div class="c nm it" style="left:193px">Example Task</div>
<div class="abs" style="left:691px;top:19px"><svg width="13" height="10" viewBox="0 0 13 10"><path fill="none" stroke="#1e9cf0" stroke-width="1.400" d="M0.700 5.500l3.600 3.500L12.300 1"/></svg></div>
<div class="c st-done" style="left:708px">Completed</div>
<div class="c" style="left:805px">Example Project</div>
<div class="c" style="left:955px">User</div>
<div class="c" style="left:1070px">45 minutes ago</div>
<div class="c" style="left:1220px">32 minutes ago</div>
<div class="c" style="left:1370px">10</div>
</div>
<div class="row">
<div class="cb"></div>
<div class="abs" style="left:78px;top:15px"><svg width="20" height="20" viewBox="0 0 24 24"><path fill="#dde6fb" d="M5 13.18v4L12 21l7-3.82v-4L12 17l-7-3.82zM12 3 1 9l11 6 9-4.91V17h2V9L12 3z"/></svg></div>
<div class="c" style="left:105px">Training</div>
<div class="c nm it" style="left:193px">PyTorch base 3</div>
<div class="tag lg" style="left:390px;top:15px;width:190px;background:#8d3c40;--c:#8d3c40">opt: e205d684f7954571a7309<span class="el">…</span></div>
<div class="tag" style="left:594px;top:15px;width:66px;background:#a6359c;--c:#a6359c">optimi<span class="el">…</span></div>
<div class="abs" style="left:691px;top:19px"><svg width="12" height="9" viewBox="0 0 12 9"><path fill="none" stroke="#c9ef00" stroke-width="1.400" stroke-linejoin="round" d="M3.300 8.100a2.500 2.500 0 0 1-.3-5 3.300 3.300 0 0 1 6.300.800 2.150 2.150 0 0 1-.3 4.200z"/><path fill="none" stroke="#c9ef00" stroke-width="1.200" d="M4.300 5.400l1.300 1.200 2.300-2.600"/></svg></div>
<div class="c st-pub" style="left:708px">Published</div>
<div class="c" style="left:805px">Example Project</div>
<div class="c" style="left:955px">User</div>
<div class="c" style="left:1070px">3 years ago</div>
<div class="c" style="left:1220px">4 months ago</div>
<div class="c" style="left:1370px">1</div>
</div>
<div class="row">
<div class="cb"></div>
<div class="abs" style="left:78px;top:15px"><svg width="20" height="20" viewBox="0 0 24 24"><path fill="#dde6fb" d="M5 13.18v4L12 21l7-3.82v-4L12 17l-7-3.82zM12 3 1 9l11 6 9-4.91V17h2V9L12 3z"/></svg></div>
<div class="c" style="left:105px">Training</div>
<div class="c nm it" style="left:193px">Keras HP optimization base</div>
<div class="abs" style="left:691px;top:20px"><svg width="11" height="11" viewBox="0 0 11 11"><path fill="#d2d3d6" d="M0.500 10.500l0.700-3L7.900 0.800l2.300 2.300-6.700 6.700z"/><path stroke="#151922" stroke-width="0.600" d="M6.400 2.300l2.300 2.300M1.500 7.200l2.300 2.300"/></svg></div>
<div class="c st-draft" style="left:708px">Draft</div>
<div class="c" style="left:805px">Example Project/Hy<span class="el">…</span></div>
<div class="c" style="left:955px">User</div>
<div class="c" style="left:1070px"></div>
<div class="c" style="left:1220px">3 years ago</div>
<div class="c" style="left:1370px">0</div>
</div>
<div class="row">
<div class="cb"></div>
<div class="abs" style="left:78px;top:15px"><svg width="20" height="20" viewBox="0 0 24 24"><path fill="#dde6fb" d="M5 13.18v4L12 21l7-3.82v-4L12 17l-7-3.82zM12 3 1 9l11 6 9-4.91V17h2V9L12 3z"/></svg></div>
<div class="c" style="left:105px">Training</div>
<div class="c nm it" style="left:193px">Example Experiment 2</div>
<div class="abs" style="left:691px;top:19px"><svg width="13" height="10" viewBox="0 0 13 10"><path fill="none" stroke="#1e9cf0" stroke-width="1.400" d="M0.700 5.500l3.600 3.500L12.300 1"/></svg></div>
<div class="c st-done" style="left:708px">Completed</div>
<div class="c" style="left:805px">Example Project</div>
<div class="c" style="left:955px">User</div>
<div class="c" style="left:1070px">3 years ago</div>
<div class="c" style="left:1220px">3 years ago</div>
<div class="c" style="left:1370px">2814</div>
</div>
</div>
<div id="hs"></div><div id="vs"></div>
<div id="foot">
<div class="abs up" style="left:88px;top:0;line-height:46px;color:#a4c8ff">SHOW 3 TASKS SELECTED</div>
<div id="cmp"><div class="abs" style="left:16px;top:9px"><svg width="16" height="16" viewBox="0 0 16 16" style="overflow:visible"><path fill="none" stroke="#a4c8ff" stroke-width="1.600" stroke-linecap="round" stroke-linejoin="round" d="M3.100 4.500V10.500a2.500 2.500 0 0 0 2.500 2.500H8.300M6.600 10.700l2.400 2.300-2.400 2.300M12.800 11V5a2.500 2.500 0 0 0-2.500-2.500H7.700M9.400 0.300L7 2.500l2.400 2.300"/><circle cx="3.100" cy="2.800" r="1.900" fill="#a4c8ff"/><circle cx="12.800" cy="12.700" r="1.900" fill="#a4c8ff"/></svg></div><div class="abs up" style="left:40px;top:0;line-height:34px">COMPARE</div></div>
<div class="fsep" style="left:408px"></div>
<div class="fsep" style="left:481px"></div>
<div class="fsep" style="left:824px"></div>
<div class="fsep" style="left:897px"></div>
<div class="fi" style="left:436px"><svg width="18" height="18" viewBox="0 0 18 18" style="overflow:visible"><path fill="#a4c8ff" d="M0.100 4.700V2.400a1.500 1.500 0 0 1 1.500-1.500h14.800a1.500 1.500 0 0 1 1.500 1.500V4.700zM0.500 5.600h17v11.300a1.500 1.500 0 0 1-1.500 1.500H2a1.500 1.500 0 0 1-1.500-1.500z"/><rect x="5.700" y="9" width="6.600" height="2" rx="0.600" fill="#1c1c1d"/></svg></div>
<div class="fi" style="left:509px"><svg width="18" height="18" viewBox="0 0 18 18" style="overflow:visible"><path fill="#69696c" d="M0.300 5L5.900 9.500 0.300 14z"/><g transform="translate(-0.6 0)"><path fill="none" stroke="#69696c" stroke-width="1.600" stroke-linejoin="round" d="M8.200 1.800H16.800V5C16.800 7 13.600 8.300 13.300 9.500 13.600 10.700 16.800 12 16.800 14V17.200H8.200V14C8.200 12 11.400 10.700 11.700 9.500 11.400 8.300 8.200 7 8.200 5Z"/><path fill="#69696c" d="M10.600 4.600h3.800l-1.900 2zM10 16.400c0-1.600 2.500-2.900 2.500-2.900s2.500 1.300 2.500 2.900z"/></g></svg></div>
<div class="fi" style="left:563px"><svg width="18" height="18" viewBox="0 0 18 18" style="overflow:visible"><path transform="translate(-2.640 -2.040) scale(0.960)" fill="#69696c" d="M17.650 6.350A7.958 7.958 0 0 0 12 4a8 8 0 1 0 7.730 10h-2.080A5.990 5.990 0 0 1 12 18c-3.310 0-6-2.690-6-6s2.690-6 6-6c1.660 0 3.140.690 4.220 1.780L13 11h7V4l-2.350 2.350z"/></svg></div>
<div class="fi" style="left:617px"><svg width="18" height="18" viewBox="0 0 18 18" style="overflow:visible"><path transform="translate(-1.100 0) scale(0.790)" fill="#a4c8ff" stroke="#a4c8ff" stroke-width="0.500" d="M13 3a9 9 0 0 0-9 9H1l3.890 3.890.07.140L9 12H6c0-3.870 3.130-7 7-7s7 3.130 7 7-3.130 7-7 7c-1.930 0-3.680-.790-4.940-2.060l-1.420 1.420A8.954 8.954 0 0 0 13 21a9 9 0 0 0 0-18zm-1 5v5l4.280 2.540.720-1.210-3.500-2.080V8H12z"/></svg></div>
<div class="fi" style="left:671px"><svg width="18" height="18" viewBox="0 0 18 18" style="overflow:visible"><rect x="2.700" y="3.700" width="12.600" height="12.200" rx="1.700" fill="#a4c8ff"/></svg></div>
<div class="fi" style="left:725px"><svg width="18" height="18" viewBox="0 0 18 18" style="overflow:visible"><rect x="1.100" y="1.700" width="15.500" height="15.400" rx="2.200" fill="none" stroke="#69696c" stroke-width="1.400"/><rect x="4.400" y="5" width="8.900" height="8.800" rx="1" fill="#69696c"/><rect x="7.800" y="8.400" width="2.100" height="2.100" fill="#1c1c1d"/></svg></div>
<div class="fi" style="left:779px"><svg width="18" height="18" viewBox="0 0 18 18" style="overflow:visible"><g transform="translate(-0.300 -0.360) scale(0.765)"><path fill="#a4c8ff" d="M19.350 10.040A7.490 7.490 0 0 0 12 4C9.110 4 6.600 5.640 5.350 8.040A5.994 5.994 0 0 0 0 14c0 3.310 2.690 6 6 6h13c2.760 0 5-2.240 5-5 0-2.640-2.050-4.780-4.650-4.960z"/><path fill="#1c1c1d" d="M12 9.500l-4.500 4.500h3.200v6h2.600v-6h3.200z"/></g></svg></div>
<div class="fi" style="left:852px"><svg width="18" height="18" viewBox="0 0 18 18" style="overflow:visible"><path fill="#a4c8ff" d="M1.500 3.600h10.200a1.500 1.500 0 0 1 1.100.500L18.100 9.850l-5.300 5.750a1.500 1.500 0 0 1-1.100.500H1.500a1.500 1.500 0 0 1-1.500-1.500V5.100a1.500 1.500 0 0 1 1.500-1.500z"/><circle cx="13.100" cy="9.750" r="1.250" fill="#1c1c1d"/></svg></div>
<div class="fi" style="left:925px"><svg width="18" height="18" viewBox="0 0 18 18" style="overflow:visible"><path fill="#a4c8ff" d="M1.800 2h5l1.500 1.800h8.300a1.500 1.500 0 0 1 1.500 1.500V15.800a1.500 1.500 0 0 1-1.500 1.500H1.800a1.500 1.500 0 0 1-1.500-1.500V3.500a1.500 1.500 0 0 1 1.500-1.500z"/><path fill="#1c1c1d" d="M0 9.700h8.600V7.200l3.700 3.200-3.700 3.200v-2.500H0z"/></svg></div>
</div>
<div id="menu">
<div class="mi" style="top:3px;letter-spacing:0.08px"><svg width="18" height="18" viewBox="0 0 18 18" style="overflow:visible"><path fill="#a4c8ff" fill-rule="evenodd" d="M1.600 2.700h14.800a1.500 1.500 0 0 1 1.500 1.500v11.100a1.500 1.500 0 0 1-1.500 1.500H1.600a1.500 1.500 0 0 1-1.500-1.500V4.200a1.500 1.500 0 0 1 1.500-1.500zM7.900 7.200v6.700h7.200V7.200zM2.400 7.200v1.100h3.300V7.200zM2.400 10v1.100h3.300V10zM2.400 12.800v1.100h3.300v-1.100z"/></svg><span>Details</span></div>
<div class="mi" style="top:43px;letter-spacing:-0.1px"><svg width="18" height="18" viewBox="0 0 18 18" style="overflow:visible"><rect x="0.900" y="3.500" width="16.200" height="12.400" rx="1.300" fill="none" stroke="#a4c8ff" stroke-width="1.600"/><path fill="#a4c8ff" d="M3.300 5.300h0.900V12h-0.900zM4.600 11.200V7.800l1.400-2.100 1.900 3.200 1.500-1.300 2.200 3.600z"/><rect x="3" y="12.700" width="12" height="0.900" fill="#a4c8ff"/></svg><span>View Full Screen</span></div>
<div class="msep" style="top:88px"></div>
<div class="mi dis" style="top:92px;letter-spacing:-0.09px"><svg width="18" height="18" viewBox="0 0 18 18" style="overflow:visible"><path fill="#4a5b74" d="M0.300 7.300L3.900 9.600 0.300 11.900zM4.200 7.300L7.800 9.600 4.200 11.900z"/><g transform="translate(0 0)"><path fill="none" stroke="#4a5b74" stroke-width="1.600" stroke-linejoin="round" d="M8.200 1.800H16.800V5C16.800 7 13.600 8.300 13.300 9.500 13.600 10.700 16.800 12 16.800 14V17.200H8.200V14C8.200 12 11.400 10.700 11.700 9.500 11.400 8.300 8.200 7 8.200 5Z"/><path fill="#4a5b74" d="M10.600 4.600h3.800l-1.900 2zM10 16.400c0-1.600 2.500-2.900 2.500-2.900s2.500 1.300 2.500 2.900z"/></g></svg><span>Manage Queue</span></div>
<div class="mi dis" style="top:132px;letter-spacing:0.03px"><svg width="18" height="18" viewBox="0 0 18 18" style="overflow:visible"><rect x="0.100" y="2.7" width="17.800" height="4" rx="0.900" fill="#4a5b74"/><rect x="2.300" y="4.2" width="1.300" height="1" fill="#1c1c1e"/><rect x="4.800" y="4.2" width="1.300" height="1" fill="#1c1c1e"/><rect x="9.500" y="4.2" width="6" height="1" fill="#1c1c1e"/><rect x="0.100" y="7.6" width="17.800" height="4" rx="0.900" fill="#4a5b74"/><rect x="2.300" y="9.1" width="1.300" height="1" fill="#1c1c1e"/><rect x="4.800" y="9.1" width="1.300" height="1" fill="#1c1c1e"/><rect x="9.500" y="9.1" width="6" height="1" fill="#1c1c1e"/><rect x="0.100" y="12.5" width="17.800" height="4" rx="0.900" fill="#4a5b74"/><rect x="2.300" y="14.0" width="1.300" height="1" fill="#1c1c1e"/><rect x="4.800" y="14.0" width="1.300" height="1" fill="#1c1c1e"/><rect x="9.500" y="14.0" width="6" height="1" fill="#1c1c1e"/><rect x="2.500" y="16.500" width="4" height="0.900" fill="#4a5b74"/><rect x="11.500" y="16.500" width="4" height="0.900" fill="#4a5b74"/></svg><span>View Worker</span></div>
<div class="msep" style="top:177px"></div>
<div class="mi dis" style="top:181px;letter-spacing:-0.2px"><svg width="18" height="18" viewBox="0 0 18 18" style="overflow:visible"><g transform="translate(-0.260 0.140) scale(0.780) matrix(0 -1 -1 0 24 24)" fill="none" stroke="#4a5b74" stroke-width="2.600" stroke-linecap="round" stroke-linejoin="round"><path d="M10 13a5 5 0 0 0 7.540.540l3-3a5 5 0 0 0-7.070-7.070l-1.720 1.710"/><path d="M14 11a5 5 0 0 0-7.540-.540l-3 3a5 5 0 0 0 7.070 7.070l1.710-1.710"/></g></svg><span>Share</span></div>
<div class="mi" style="top:221px;letter-spacing:0.08px"><svg width="18" height="18" viewBox="0 0 18 18" style="overflow:visible"><path fill="#a4c8ff" d="M0.100 4.700V2.400a1.500 1.500 0 0 1 1.500-1.500h14.800a1.500 1.500 0 0 1 1.500 1.500V4.700zM0.500 5.600h17v11.300a1.500 1.500 0 0 1-1.500 1.500H2a1.500 1.500 0 0 1-1.500-1.500z"/><rect x="5.700" y="9" width="6.600" height="2" rx="0.600" fill="#1c1c1e"/></svg><span>Archive (3 items)</span></div>
<div class="mi" style="top:261px;letter-spacing:0.08px"><svg width="18" height="18" viewBox="0 0 18 18" style="overflow:visible"><path transform="translate(-1.100 0) scale(0.790)" fill="#a4c8ff" stroke="#a4c8ff" stroke-width="0.500" d="M13 3a9 9 0 0 0-9 9H1l3.890 3.890.07.140L9 12H6c0-3.870 3.130-7 7-7s7 3.130 7 7-3.130 7-7 7c-1.930 0-3.680-.790-4.940-2.060l-1.420 1.420A8.954 8.954 0 0 0 13 21a9 9 0 0 0 0-18zm-1 5v5l4.280 2.540.720-1.210-3.500-2.080V8H12z"/></svg><span>Reset (3 items)</span></div>
<div class="mi" style="top:301px;letter-spacing:0.08px"><svg width="18" height="18" viewBox="0 0 18 18" style="overflow:visible"><rect x="2.700" y="3.700" width="12.600" height="12.200" rx="1.700" fill="#a4c8ff"/></svg><span>Abort (1 item)</span></div>
<div class="mi" style="top:341px;letter-spacing:0.08px"><svg width="18" height="18" viewBox="0 0 18 18" style="overflow:visible"><g transform="translate(-0.300 -0.360) scale(0.765)"><path fill="#a4c8ff" d="M19.350 10.040A7.490 7.490 0 0 0 12 4C9.110 4 6.600 5.640 5.350 8.040A5.994 5.994 0 0 0 0 14c0 3.310 2.690 6 6 6h13c2.760 0 5-2.240 5-5 0-2.640-2.050-4.780-4.650-4.960z"/><path fill="#1c1c1e" d="M12 9.500l-4.500 4.500h3.200v6h2.600v-6h3.200z"/></g></svg><span>Publish (2 items)</span></div>
<div class="msep" style="top:386px"></div>
<div class="mi" style="top:390px;letter-spacing:0.08px"><svg width="18" height="18" viewBox="0 0 18 18" style="overflow:visible"><path fill="#a4c8ff" d="M1.500 3.600h10.200a1.500 1.500 0 0 1 1.100.500L18.100 9.850l-5.300 5.750a1.500 1.500 0 0 1-1.100.500H1.500a1.500 1.500 0 0 1-1.500-1.500V5.100a1.500 1.500 0 0 1 1.500-1.500z"/><circle cx="13.100" cy="9.750" r="1.250" fill="#1c1c1e"/></svg><span>Add Tag (3 items)</span></div>
<div class="msep" style="top:435px"></div>
<div class="mi" style="top:439px;letter-spacing:0.08px"><svg width="18" height="18" viewBox="0 0 18 18" style="overflow:visible"><rect x="0.300" y="6" width="12.600" height="11.900" rx="1.600" fill="#a4c8ff"/><rect x="4.700" y="0" width="14.300" height="14" rx="2.400" fill="#1c1c1e"/><rect x="5.600" y="0.900" width="12.500" height="12.200" rx="1.600" fill="#a4c8ff"/></svg><span>Clone</span></div>
<div class="mi" style="top:479px;letter-spacing:0.08px"><svg width="18" height="18" viewBox="0 0 18 18" style="overflow:visible"><path fill="#a4c8ff" d="M1.800 2h5l1.500 1.800h8.300a1.500 1.500 0 0 1 1.500 1.500V15.800a1.500 1.500 0 0 1-1.500 1.500H1.800a1.500 1.500 0 0 1-1.500-1.500V3.500a1.500 1.500 0 0 1 1.500-1.500z"/><path fill="#1c1c1e" d="M0 9.700h8.600V7.200l3.700 3.200-3.700 3.200v-2.500H0z"/></svg><span>Move to Project (3 items)</span></div>
<div class="abs" style="left:198px;top:405px"><svg width="6" height="10" viewBox="0 0 6 10"><path fill="#a4c8ff" d="M0 0l6 5-6 5z"/></svg></div>
</div>
</body></html>
